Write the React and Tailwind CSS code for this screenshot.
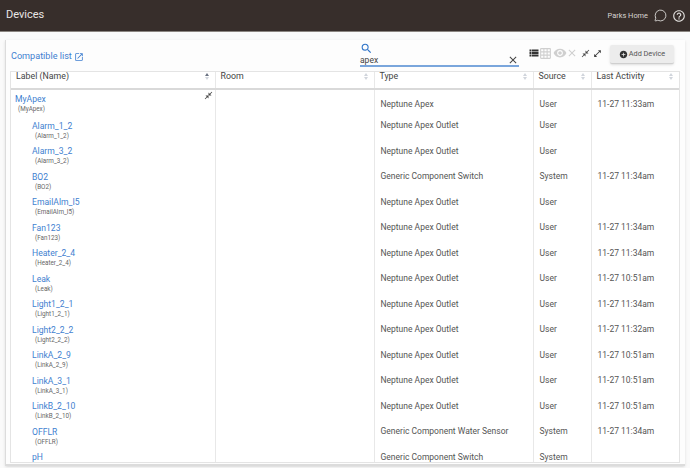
import {
  MdSearch,
  MdClose,
  MdViewList,
  MdGridOn,
  MdVisibility,
  MdOpenInNew,
  MdAddCircle,
  MdCloseFullscreen,
  MdOpenInFull,
  MdHelpOutline,
} from "react-icons/md";
import { MessageCircle } from "lucide-react";

const devices = [
  { name: "Alarm_1_2", type: "Neptune Apex Outlet", source: "User", last: "" },
  { name: "Alarm_3_2", type: "Neptune Apex Outlet", source: "User", last: "" },
  { name: "BO2", type: "Generic Component Switch", source: "System", last: "11-27 11:34am" },
  { name: "EmailAlm_I5", type: "Neptune Apex Outlet", source: "User", last: "" },
  { name: "Fan123", type: "Neptune Apex Outlet", source: "User", last: "11-27 11:34am" },
  { name: "Heater_2_4", type: "Neptune Apex Outlet", source: "User", last: "11-27 11:34am" },
  { name: "Leak", type: "Neptune Apex Outlet", source: "User", last: "11-27 10:51am" },
  { name: "Light1_2_1", type: "Neptune Apex Outlet", source: "User", last: "11-27 11:34am" },
  { name: "Light2_2_2", type: "Neptune Apex Outlet", source: "User", last: "11-27 11:32am" },
  { name: "LinkA_2_9", type: "Neptune Apex Outlet", source: "User", last: "11-27 10:51am" },
  { name: "LinkA_3_1", type: "Neptune Apex Outlet", source: "User", last: "11-27 10:51am" },
  { name: "LinkB_2_10", type: "Neptune Apex Outlet", source: "User", last: "11-27 10:51am" },
  { name: "OFFLR", type: "Generic Component Water Sensor", source: "System", last: "11-27 11:34am" },
  { name: "pH", type: "Generic Component Switch", source: "System", last: "", noSub: true },
];

function SortIcon({ active }) {
  return (
    <span className="flex flex-col gap-[1px] items-center">
      <span
        className={`w-0 h-0 border-x-[2px] border-x-transparent border-b-[3px] ${
          active ? "border-b-gray-500" : "border-b-gray-300"
        }`}
      />
      <span className="w-0 h-0 border-x-[2px] border-x-transparent border-t-[3px] border-t-gray-300" />
    </span>
  );
}

function HeaderCell({ label, active, className }) {
  return (
    <th className={`h-[17px] p-0 font-normal text-left align-top border-b-2 border-b-[#d9d9d9] ${className}`}>
      <div className="flex items-center justify-between pl-[5px] pr-[6px] h-[9px]">
        <span className="text-[8.8px] leading-[9px] text-[#444]">{label}</span>
        <SortIcon active={active} />
      </div>
    </th>
  );
}

export default function App() {
  return (
    <div className="w-[690px] h-[468px] overflow-hidden bg-[#fafafa] font-['Roboto',sans-serif]">
      {/* Top bar */}
      <div className="flex items-center justify-between h-[32px] pl-[6px] pr-[4px] bg-[#372e2b] border-b border-[#8a8580]">
        <span className="text-[11px] text-[#e8e6e5]">Devices</span>
        <div className="flex items-center">
          <span className="text-[7.4px] text-[#d8d5d3] mr-[6px]">Parks Home</span>
          <MessageCircle className="w-[13px] h-[13px] text-[#e0dedc] mr-[5px]" strokeWidth={1.6} />
          <MdHelpOutline className="text-[14px] text-[#e0dedc]" />
        </div>
      </div>

      {/* Card */}
      <div className="ml-[5px] mr-[5px] mt-[8px] h-[426px] bg-white/60 border-b-2 border-l border-[#dcdcdc] shadow-sm pl-[4px] pr-[5px]">
        {/* Toolbar */}
        <div className="flex h-[31px]">
          <div className="flex items-center w-[350px] pl-[1px] pt-[3px]">
            <span className="text-[9.1px] text-[#3f7fd0]">Compatible list</span>
            <MdOpenInNew className="text-[10px] ml-[2px] text-[#3f7fd0]" />
          </div>
          <div className="w-[159px] h-[26px] mt-[1px] border-b-2 border-[#7aa6dc]">
            <MdSearch className="text-[13px] text-[#2f74c8] mt-[1px]" />
            <div className="flex items-center justify-between h-[10px]">
              <span className="text-[8.5px] leading-[10px] text-[#444]">apex</span>
              <MdClose className="text-[12px] text-[#444]" />
            </div>
          </div>
          <div className="flex items-center h-[16px] mt-[5px] ml-[9px]">
            <MdViewList className="text-[12px] text-[#333]" />
            <MdGridOn className="text-[13px] text-[#cfcfcf] -ml-[1px]" />
            <MdVisibility className="text-[14px] text-[#cfcfcf] ml-[1px]" />
            <MdClose className="text-[12px] text-[#cfcfcf] -ml-[1px]" />
            <MdCloseFullscreen className="text-[9px] text-[#444] ml-[3px]" />
            <MdOpenInFull className="text-[9px] text-[#444] ml-[3px]" />
          </div>
          <button className="flex items-center justify-center w-[64px] h-[19px] mt-[5px] ml-[8px] rounded-[2px] bg-[#ececec] border-b border-[#cfcfcf] shadow-sm text-[7.3px] text-[#555]">
            <MdAddCircle className="text-[9px] text-[#333] mr-[1px]" />
            Add Device
          </button>
        </div>

        {/* Device table */}
        <div className="w-[670px] h-[392px] overflow-hidden border border-[#e4e4e4] bg-white">
          <table className="table-fixed w-[668px] border-collapse text-[8.5px] leading-[12px] text-[#555]">
            <colgroup>
              <col className="w-[204px]" />
              <col className="w-[159px]" />
              <col className="w-[159px]" />
              <col className="w-[58px]" />
              <col className="w-[88px]" />
            </colgroup>
            <thead>
              <tr>
                <HeaderCell label="Label (Name)" active className="border-r border-r-[#e8e8e8]" />
                <HeaderCell label="Room" className="border-r border-r-[#e8e8e8]" />
                <HeaderCell label="Type" className="border-r border-r-[#e8e8e8]" />
                <HeaderCell label="Source" className="border-r border-r-[#e8e8e8]" />
                <HeaderCell label="Last Activity" />
              </tr>
            </thead>
            <tbody>
              <tr className="h-[29px]">
                <td className="p-0 pl-[4px] pt-[4px] align-top border-r border-[#e8e8e8] relative">
                  <div className="text-[8.6px] leading-[11px] text-[#3f7fd0]">MyApex</div>
                  <div className="text-[6.3px] leading-[9px] pl-[3px] text-[#666]">(MyApex)</div>
                  <MdCloseFullscreen className="absolute top-[1px] right-[2px] text-[9px] text-[#444]" />
                </td>
                <td className="p-0 border-r border-[#e8e8e8]" />
                <td className="p-0 pl-[6px] pt-[8px] align-top border-r border-[#e8e8e8]">Neptune Apex</td>
                <td className="p-0 pl-[6px] pt-[8px] align-top border-r border-[#e8e8e8]">User</td>
                <td className="p-0 pl-[6px] pt-[8px] align-top">11-27 11:33am</td>
              </tr>
              {devices.map((device) => (
                <tr key={device.name} className="h-[25.5px]">
                  <td className="p-0 pl-[21px] pt-[2.5px] align-top border-r border-[#e8e8e8]">
                    <div className="text-[8.6px] leading-[11px] text-[#3f7fd0]">{device.name}</div>
                    {!device.noSub && (
                      <div className="text-[6.3px] leading-[9px] pl-[3px] text-[#666]">({device.name})</div>
                    )}
                  </td>
                  <td className="p-0 border-r border-[#e8e8e8]" />
                  <td className="p-0 pl-[6px] pt-[1px] align-top border-r border-[#e8e8e8]">{device.type}</td>
                  <td className="p-0 pl-[6px] pt-[1px] align-top border-r border-[#e8e8e8]">{device.source}</td>
                  <td className="p-0 pl-[6px] pt-[1px] align-top">{device.last}</td>
                </tr>
              ))}
            </tbody>
          </table>
        </div>
      </div>
    </div>
  );
}
